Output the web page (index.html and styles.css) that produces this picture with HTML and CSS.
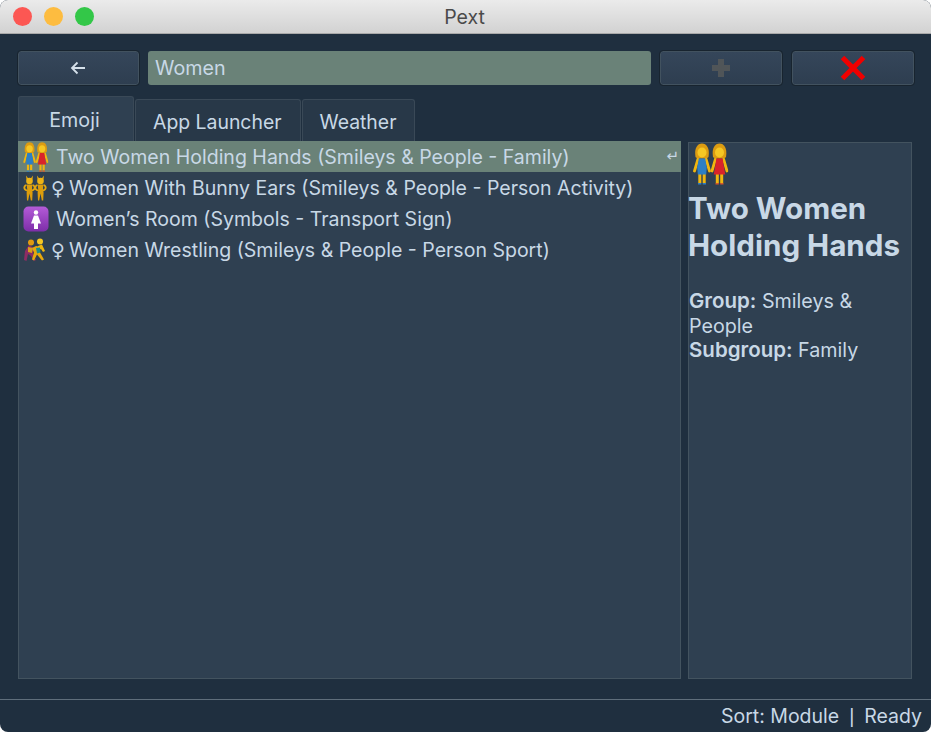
FILE: index.html
```html
<!DOCTYPE html>
<html lang="en">
<head>
  <meta charset="UTF-8" />
  <title>Pext</title>
  <link rel="stylesheet" href="styles.css">
</head>
<body>
  <svg class="defs" width="0" height="0">
    <defs>
      <linearGradient id="purple" x1="0" y1="0" x2="0" y2="1">
        <stop offset="0" stop-color="#b45bd8"/>
        <stop offset="1" stop-color="#7d2ea8"/>
      </linearGradient>
    </defs>
    <symbol id="woman-blue" viewBox="0 0 18 42">
      <path d="M5 16 1.500 28M13 16l3.500 12" stroke="#f0b60e" stroke-width="2.800" fill="none" stroke-linecap="round"/>
      <path d="M6.800 31v9M11.200 31v9" stroke="#f0b60e" stroke-width="3" fill="none"/>
      <path d="M2.500 14C1 5 4.500.5 9 .5s8 4.500 6.500 13.500c-1 2-12 2-13 0z" fill="#dc9c12"/>
      <ellipse cx="9" cy="9.500" rx="4.500" ry="5" fill="#f6c723"/>
      <path d="M5.800 15.500h6.400l1.600 9-.6 7H4.800l-.6-7z" fill="#2d7fc4"/>
      <path d="M5 40h3.300v1.500H5zM9.700 40H13v1.500H9.700z" fill="#2d7fc4"/>
    </symbol>
    <symbol id="woman-red" viewBox="0 0 18 42">
      <path d="M5 16 1.500 28M13 16l3.500 12" stroke="#f0b60e" stroke-width="2.800" fill="none" stroke-linecap="round"/>
      <path d="M6.800 31v9M11.200 31v9" stroke="#f0b60e" stroke-width="3" fill="none"/>
      <path d="M2.500 14C1 5 4.500.5 9 .5s8 4.500 6.500 13.500c-1 2-12 2-13 0z" fill="#dc9c12"/>
      <ellipse cx="9" cy="9.500" rx="4.500" ry="5" fill="#f6c723"/>
      <path d="M5.800 15.500h6.400l1 7 1.600 9H3.200l1.600-9z" fill="#d9232a"/>
      <path d="M5 40h3.300v1.500H5zM9.700 40H13v1.500H9.700z" fill="#d9562a"/>
    </symbol>
    <symbol id="two-women" viewBox="0 0 36 42">
      <use href="#woman-blue" x="0" y="0" width="18" height="42"/>
      <use href="#woman-red" x="17.500" y="0" width="18" height="42"/>
    </symbol>
    <symbol id="bunny" viewBox="0 0 13 26">
      <path d="M3.500 4.500 3 .5 5.300 3.500h2.400L10 .5 9.500 4.500" fill="#e5a80f"/>
      <ellipse cx="6.500" cy="6" rx="3.300" ry="3.200" fill="#eeb415"/>
      <path d="M3.500 10C.5 11 .5 14.500 4 15.500M9.500 10c3 1 3 4.500-.5 5.500" fill="none" stroke="#e5a80f" stroke-width="1.800"/>
      <path d="M3.800 9.500h5.400l-.2 5 .6 3-.4 8H7.800l-1.300-7-1.300 7H4l-.4-8 .6-3z" fill="#dc9d0c"/>
    </symbol>
    <symbol id="bunny-women" viewBox="0 0 24 26">
      <use href="#bunny" x="0" y="0" width="13" height="26"/>
      <use href="#bunny" x="11" y="0" width="13" height="26"/>
    </symbol>
    <symbol id="wrestlers" viewBox="0 0 24 24">
      <path d="M6 7 2 13 1 22l2.500 1L5 16l3 2 3 5 2-1-3-6 1-6z" fill="#8d2c63"/>
      <path d="M9 10l4-2 3 .5 1 6 4 7-2 1-5-6-3 6-2-1 2-7z" fill="#e8a80c"/>
      <path d="M15 8l4-1.500 3 6.500-2 1-2-3-3 1z" fill="#f0b60e"/>
      <path d="M13 10l4-.5.5 5-3.500 1z" fill="#1f8c86"/>
      <path d="M5 9l5 1-1 5-4-1z" fill="#d9a01c"/>
      <circle cx="8" cy="4.500" r="3" fill="#e09a10"/>
      <circle cx="17" cy="3.500" r="3" fill="#f6c723"/>
    </symbol>
  </svg>

  <div class="window">
    <div class="titlebar">
      <div class="lights">
        <span class="light red"></span>
        <span class="light yellow"></span>
        <span class="light green"></span>
      </div>
      <div class="title">Pext</div>
    </div>

    <div class="content">
      <div class="toolbar">
        <button class="btn btn-back">
          <svg class="back-arrow" width="16" height="14" viewBox="0 0 16 14"><path d="M15 7H2M7.500 1.500 2 7l5.500 5.500" fill="none" stroke="#d5e0ea" stroke-width="1.800"/></svg>
        </button>
        <div class="search">Women</div>
        <button class="btn btn-add">
          <svg width="20" height="20" viewBox="0 0 20 20"><path d="M10 1v18M1 10h18" stroke="#505558" stroke-width="6"/></svg>
        </button>
        <button class="btn btn-close">
          <svg width="26" height="26" viewBox="0 0 26 26"><path d="M2.500 2.500l21 21M23.500 2.500l-21 21" stroke="#f00000" stroke-width="5"/></svg>
        </button>
      </div>

      <div class="tabs">
        <div class="tab active">Emoji</div>
        <div class="tab">App Launcher</div>
        <div class="tab">Weather</div>
      </div>

      <div class="panes">
        <div class="list">
          <div class="row selected">
            <svg class="emoji" width="26" height="30"><use href="#two-women"/></svg>
            <span class="label">Two Women Holding Hands (Smileys &amp; People - Family)</span>
            <span class="enter">↵</span>
          </div>
          <div class="row">
            <svg class="emoji" width="24" height="26"><use href="#bunny-women"/></svg>
            <span class="sign">♀</span>
            <span class="label">Women With Bunny Ears (Smileys &amp; People - Person Activity)</span>
          </div>
          <div class="row">
            <svg class="emoji" width="26" height="26" viewBox="0 0 26 26">
              <rect x="0.500" y="0.500" width="25" height="25" rx="5" fill="url(#purple)"/>
              <circle cx="13" cy="6.500" r="2.200" fill="#fff"/>
              <path d="M11 9.500h4l3 8h-3v5.500h-4v-5.500H8z" fill="#fff"/>
            </svg>
            <span class="label">Women’s Room (Symbols - Transport Sign)</span>
          </div>
          <div class="row">
            <svg class="emoji" width="24" height="24"><use href="#wrestlers"/></svg>
            <span class="sign">♀</span>
            <span class="label">Women Wrestling (Smileys &amp; People - Person Sport)</span>
          </div>
        </div>

        <div class="detail">
          <svg class="detail-emoji" width="36" height="42"><use href="#two-women"/></svg>
          <h1>Two Women Holding Hands</h1>
          <p><b>Group:</b> <span>Smileys &amp;</span> <span>People</span><br><b>Subgroup:</b> <span>Family</span></p>
        </div>
      </div>
    </div>

    <div class="statusbar">Sort: Module<span class="sep">|</span>Ready</div>
  </div>
</body>
</html>
```

FILE: styles.css
```css
* {
  margin: 0;
  padding: 0;
  box-sizing: border-box;
  font-family: 'Inter', 'Noto Sans', sans-serif;
}
body {
  background: white;
  overflow: hidden;
}
.defs {
  display: block;
  height: 0;
}
.window {
  width: 931px;
  height: 732px;
  display: flex;
  flex-direction: column;
  background: #1f2f3f;
  border-radius: 8px;
  overflow: hidden;
}
.titlebar {
  height: 34px;
  flex-shrink: 0;
  display: flex;
  align-items: center;
  justify-content: center;
  position: relative;
  background: linear-gradient(#ebebeb, #d2d2d2);
  border-bottom: 1px solid #a9a9a9;
}
.lights {
  position: absolute;
  left: 13px;
  top: 7px;
  display: flex;
  gap: 12px;
}
.light {
  width: 19px;
  height: 19px;
  border-radius: 50%;
}
.red { background: #fc5753; }
.yellow { background: #fdbc40; }
.green { background: #33c748; }
.title {
  font-size: 19.5px;
  color: #4a4a4a;
  margin-left: -2px;
  padding-top: 1px;
}
.content {
  flex-grow: 1;
  display: flex;
  flex-direction: column;
  padding: 17px 17px 0 18px;
}
.toolbar {
  display: flex;
  height: 34px;
}
.btn {
  height: 34px;
  width: 121px;
  display: flex;
  align-items: center;
  justify-content: center;
  background: linear-gradient(#35465a, #2e3e50);
  border: 1px solid #42525f;
  outline: 1px solid #18242f;
  border-radius: 3px;
}
.back-arrow {
  margin-right: 2px;
}
.search {
  width: 503px;
  margin: 0 9px;
  padding-left: 7px;
  height: 34px;
  line-height: 35px;
  font-size: 19.7px;
  color: #c8d8e6;
  background: #6a8278;
  border-radius: 3px;
}
.btn-add { margin-right: 10px; width: 122px; }
.btn-close { width: 122px; }
.tabs {
  display: flex;
  gap: 1px;
  height: 46px;
  margin-top: 11px;
  align-items: flex-end;
}
.tab {
  height: 43px;
  padding: 0 18px 0 17px;
  line-height: 45px;
  font-size: 19.4px;
  color: #c8d8e6;
  background: #283848;
  border: 1px solid #3a4957;
  border-bottom: none;
  border-radius: 3px 3px 0 0;
}
.tab.active {
  height: 46px;
  width: 116px;
  padding: 0 3px 0 0;
  text-align: center;
  line-height: 46px;
  font-size: 19.7px;
  background: #2f4051;
}
.panes {
  display: flex;
  gap: 7px;
  height: 537px;
}
.list {
  width: 663px;
  background: #2f4051;
  border: 1px solid #43535f;
  border-top: none;
}
.row {
  height: 31px;
  display: flex;
  align-items: center;
  font-size: 19.55px;
  color: #c8d8e6;
  white-space: nowrap;
  padding-left: 4px;
}
.row.selected {
  background: #6a8278;
  margin: -1px -1px 0 -1px;
  padding-left: 5px;
  position: relative;
}
.emoji {
  flex-shrink: 0;
}
.sign {
  width: 22px;
  text-align: center;
  font-family: 'DejaVu Sans', sans-serif;
  font-size: 19px;
}
.row .emoji + .label {
  margin-left: 7px;
}
.enter {
  position: absolute;
  right: 2px;
  top: 6px;
  font-size: 15px;
  font-family: 'DejaVu Sans', sans-serif;
}
.detail {
  width: 224px;
  background: #2f4051;
  border: 1px solid #43535f;
  color: #c8d8e6;
}
.detail-emoji {
  display: block;
  margin: 0 0 0 4px;
}
.detail h1 {
  font-size: 29.6px;
  line-height: 37px;
  font-weight: 700;
  margin: 5px 0 0 -1px;
}
.detail p {
  font-size: 19.7px;
  line-height: 24.5px;
  margin: 25px 0 0 0;
}
.detail b {
  font-size: 20.5px;
  font-weight: 600;
  line-height: 1;
}
.statusbar {
  margin-top: 20px;
  height: 33px;
  flex-shrink: 0;
  border-top: 1px solid #5f6e7b;
  text-align: right;
  padding-right: 9px;
  font-size: 19.5px;
  line-height: 33px;
  color: #c8d8e6;
}
.sep {
  font-family: 'Liberation Sans', sans-serif;
  margin: 0 10px;
}
```
